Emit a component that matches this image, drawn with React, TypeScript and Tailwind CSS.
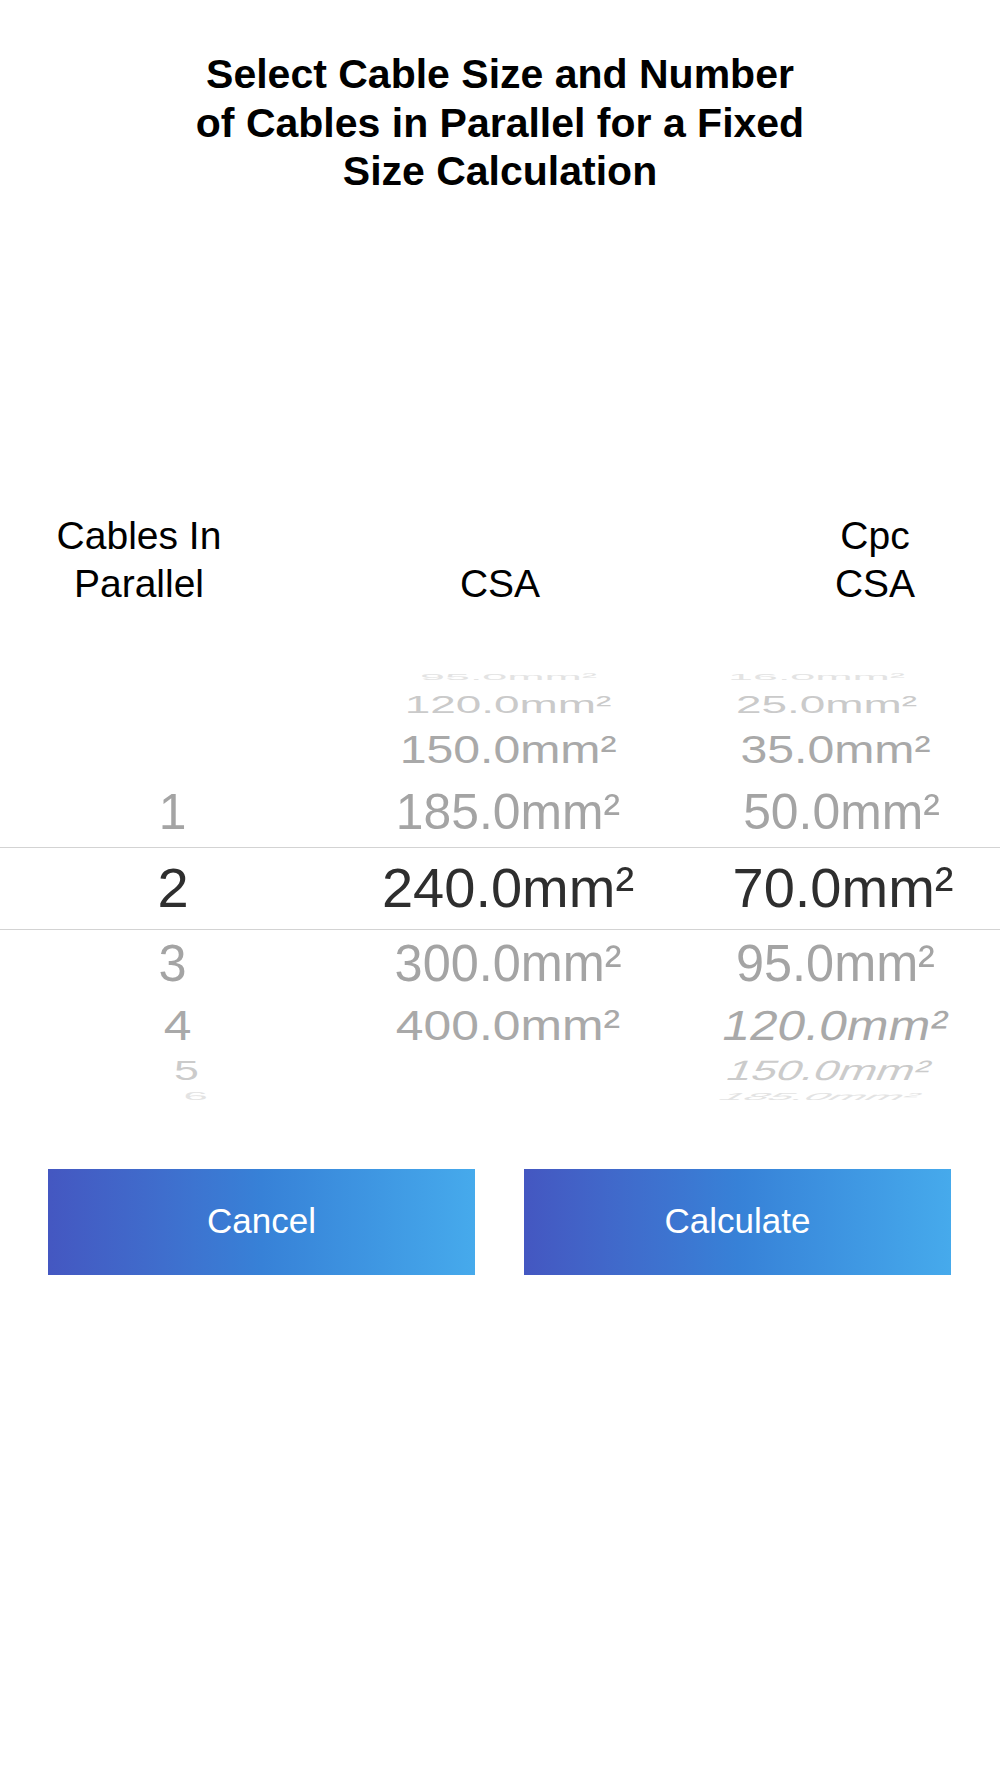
import React from "react";

type Row = {
  h: string;
  t: string;
  color: string;
  left: string | null;
  center: string | null;
  right: string;
  lx: string;
  rx: string;
  rskew: string;
};

const rows: Row[] = [
  { h: "h-[22px]", t: "scale-x-[0.8] scale-y-[0.16]", color: "text-[#e3e3e3]", left: null, center: "95.0", right: "16.0", lx: "", rx: "-translate-x-[27px]", rskew: "" },
  { h: "h-[34px]", t: "scale-x-[0.82] scale-y-[0.42]", color: "text-[#cacaca]", left: null, center: "120.0", right: "25.0", lx: "", rx: "-translate-x-[17px]", rskew: "" },
  { h: "h-[56px]", t: "scale-x-[0.86] scale-y-[0.68]", color: "text-[#a9a9a9]", left: null, center: "150.0", right: "35.0", lx: "", rx: "-translate-x-[8px]", rskew: "" },
  { h: "h-[69px]", t: "scale-x-[0.89] scale-y-[0.9]", color: "text-[#a4a4a4]", left: "1", center: "185.0", right: "50.0", lx: "translate-x-[2px]", rx: "-translate-x-[2px]", rskew: "" },
  { h: "h-[83px]", t: "scale-x-[1] scale-y-[1]", color: "text-[#2e2e2e]", left: "2", center: "240.0", right: "70.0", lx: "translate-x-[2px]", rx: "", rskew: "" },
  { h: "h-[69px]", t: "scale-x-[0.9] scale-y-[0.92]", color: "text-[#a4a4a4]", left: "3", center: "300.0", right: "95.0", lx: "translate-x-[2px]", rx: "-translate-x-[8px]", rskew: "" },
  { h: "h-[54px]", t: "scale-x-[0.89] scale-y-[0.75]", color: "text-[#a9a9a9]", left: "4", center: "400.0", right: "120.0", lx: "translate-x-[7px]", rx: "-translate-x-[8px]", rskew: "-skew-x-[10deg]" },
  { h: "h-[34px]", t: "scale-x-[0.8] scale-y-[0.5]", color: "text-[#cbcbcb]", left: "5", center: null, right: "150.0", lx: "translate-x-[16px]", rx: "-translate-x-[14px]", rskew: "-skew-x-[16deg]" },
  { h: "h-[21px]", t: "scale-x-[0.78] scale-y-[0.18]", color: "text-[#e3e3e3]", left: "6", center: null, right: "185.0", lx: "translate-x-[25px]", rx: "-translate-x-[23px]", rskew: "-skew-x-[22deg]" },
];

function PickerRow({ r, selected }: { r: Row; selected: boolean }) {
  return (
    <div
      className={`${r.h} grid grid-cols-[342px_332px_326px] ${
        selected ? "border-y border-[#d3d3d3]" : ""
      }`}
    >
      <div className="flex h-full items-center justify-center">
        {r.left && (
          <span className={`block h-0 leading-[0] text-[56px] ${r.color} ${r.t} ${r.lx}`}>
            {r.left}
          </span>
        )}
      </div>
      <div className="flex h-full items-center justify-center">
        {r.center && (
          <span className={`block h-0 leading-[0] whitespace-nowrap text-[56px] ${r.color} ${r.t}`}>
            {r.center}mm²
          </span>
        )}
      </div>
      <div className="flex h-full items-center justify-center pl-[12px]">
        <span
          className={`block h-0 leading-[0] whitespace-nowrap text-[56px] ${r.color} ${r.t} ${r.rx} ${r.rskew}`}
        >
          {r.right}mm²
        </span>
      </div>
    </div>
  );
}

export default function App() {
  return (
    <div
      className="w-[1000px] min-h-[1778px] bg-white text-black"
      style={{ fontFamily: '"Liberation Sans", Arial, sans-serif' }}
    >
      <h1 className="pt-[50px] text-center font-bold text-[41px] leading-[48.5px] text-black">
        Select Cable Size and Number
        <br />
        of Cables in Parallel for a Fixed
        <br />
        Size Calculation
      </h1>

      <div className="mt-[316px] flex items-end text-[39px] leading-[48.5px] text-black">
        <div className="w-[278px] text-center">
          Cables In
          <br />
          Parallel
        </div>
        <div className="w-[444px] text-center">CSA</div>
        <div className="w-[278px] pl-[28px] text-center">
          Cpc
          <br />
          CSA
        </div>
      </div>

      <div className="mt-[57px] flex flex-col overflow-hidden">
        {rows.map((r, i) => (
          <PickerRow key={i} r={r} selected={i === 4} />
        ))}
      </div>

      <div className="mt-[61px] flex gap-[49px] px-[48px]">
        <button className="h-[106px] w-[427px] bg-gradient-to-r from-[#4457c1] via-[#3781d7] to-[#46aaec] text-[35px] text-white">
          Cancel
        </button>
        <button className="h-[106px] w-[427px] bg-gradient-to-r from-[#4457c1] via-[#3781d7] to-[#46aaec] text-[35px] text-white">
          Calculate
        </button>
      </div>
    </div>
  );
}
